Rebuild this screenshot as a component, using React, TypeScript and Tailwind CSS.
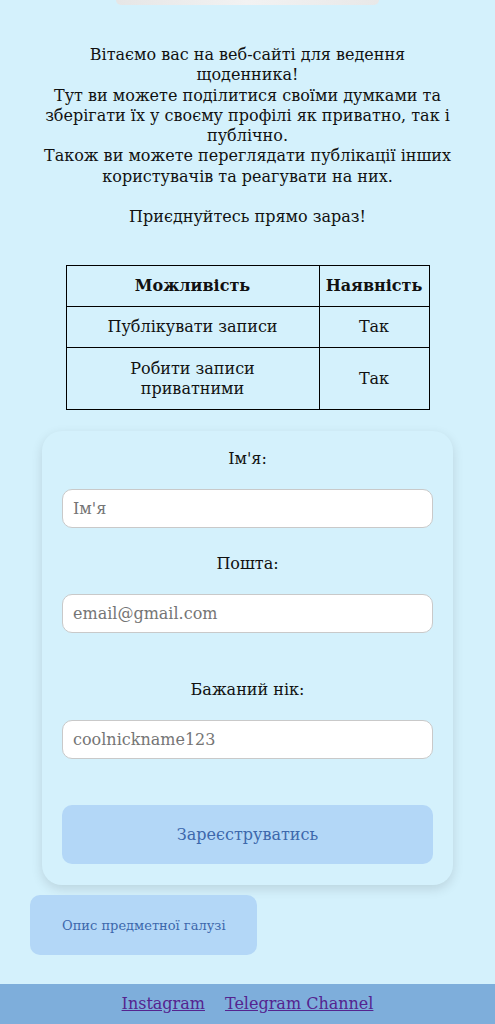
export default function App() {
  return (
    <div className="min-h-[1024px] w-full bg-[#d4f1fc] text-[#111] flex flex-col" style={{ fontFamily: '"DejaVu Serif", "Liberation Serif", serif' }}>
      <div className="mx-auto w-[263px] h-[5px] bg-gradient-to-r from-[#e6e6e6] via-[#f2f2f2] to-[#e8e8e8] rounded-b-[18px]" />

      <div className="px-10 pt-[40px] text-center text-[16px] leading-[20.3px]">
        <p>Вітаємо вас на веб-сайті для ведення щоденника!</p>
        <p>Тут ви можете поділитися своїми думками та зберігати їх у своєму профілі як приватно, так і публічно.</p>
        <p>Також ви можете переглядати публікації інших користувачів та реагувати на них.</p>
        <p className="mt-[20px]">Приєднуйтесь прямо зараз!</p>
      </div>

      <table className="mx-auto mt-[38px] w-[364px] border-collapse text-center text-[16px] leading-[20px]">
        <thead>
          <tr className="h-[41px]">
            <th className="border border-black w-[253px] font-bold">Можливість</th>
            <th className="border border-black font-bold">Наявність</th>
          </tr>
        </thead>
        <tbody>
          <tr className="h-[41px]">
            <td className="border border-black">Публікувати записи</td>
            <td className="border border-black">Так</td>
          </tr>
          <tr className="h-[62px]">
            <td className="border border-black px-12">Робити записи приватними</td>
            <td className="border border-black">Так</td>
          </tr>
        </tbody>
      </table>

      <form className="mx-[42px] mt-[21px] rounded-[20px] bg-[#d4f1fc] shadow-[0_4px_12px_rgba(0,0,0,0.12)] px-5 pt-[18px] pb-[21px] flex flex-col text-[16px]">
        <label className="text-center leading-[20px]">Ім'я:</label>
        <input placeholder="Ім'я" className="mt-5 h-[39px] rounded-[10px] border border-[#c9c9c9] bg-white px-[10px] outline-none placeholder:text-[#757575]" />
        <label className="mt-[26px] text-center leading-[20px]">Пошта:</label>
        <input placeholder="email@gmail.com" className="mt-5 h-[39px] rounded-[10px] border border-[#c9c9c9] bg-white px-[10px] outline-none placeholder:text-[#757575]" />
        <label className="mt-[47px] text-center leading-[20px]">Бажаний нік:</label>
        <input placeholder="coolnickname123" className="mt-5 h-[39px] rounded-[10px] border border-[#c9c9c9] bg-white px-[10px] outline-none placeholder:text-[#757575]" />
        <button type="button" className="mt-[46px] h-[59px] rounded-[10px] bg-[#b3d7f7] text-[#3d68ac]">Зареєструватись</button>
      </form>

      <div className="pl-[30px] mt-[10px]">
        <button type="button" className="w-[227px] h-[60px] rounded-[10px] bg-[#b3d7f7] text-[#3d68ac] text-[13px] text-left pl-8">Опис предметної галузі</button>
      </div>

      <footer className="mt-auto h-[40px] bg-[#7eaedb] flex items-center justify-center gap-5 text-[16px]">
        <a href="#" className="underline text-[#55248f]">Instagram</a>
        <a href="#" className="underline text-[#55248f]">Telegram Channel</a>
      </footer>
    </div>
  );
}
